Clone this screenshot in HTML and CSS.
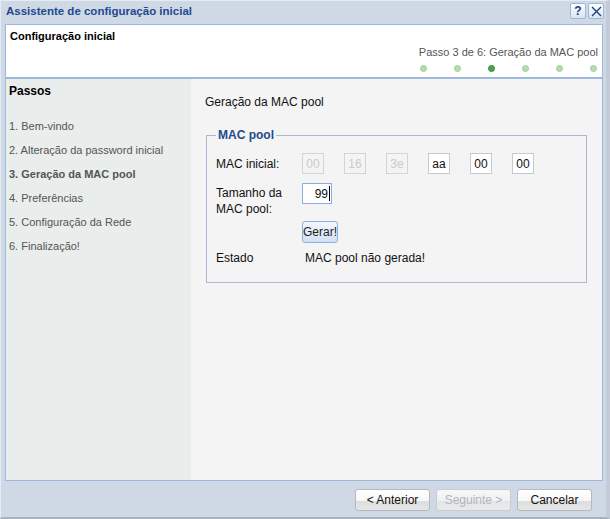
FILE: index.html
```html
<!DOCTYPE html>
<html lang="pt">
<head>
<meta charset="utf-8">
<link rel="stylesheet" href="styles.css">
</head>
<body>
<div class="window">
  <div class="titlebar">
    <span class="title">Assistente de configuração inicial</span>
    <div class="tb-buttons">
      <span class="tb-btn help">?</span>
      <span class="tb-btn close"><svg width="11" height="11" viewBox="0 0 11 11"><path d="M1 1L10 10M10 1L1 10" stroke="#1d3f7a" stroke-width="1.4" fill="none"/></svg></span>
    </div>
  </div>
  <div class="frame">
    <div class="header">
      <div class="h-title">Configuração inicial</div>
      <div class="h-step">Passo 3 de 6: Geração da MAC pool</div>
      <div class="dots">
        <span class="dot"></span><span class="dot"></span><span class="dot on"></span><span class="dot"></span><span class="dot"></span><span class="dot"></span>
      </div>
    </div>
    <div class="content">
      <div class="sidebar">
        <div class="s-title">Passos</div>
        <ul class="steps">
          <li>1. Bem-vindo</li>
          <li>2. Alteração da password inicial</li>
          <li class="current">3. Geração da MAC pool</li>
          <li>4. Preferências</li>
          <li>5. Configuração da Rede</li>
          <li>6. Finalização!</li>
        </ul>
      </div>
      <div class="main">
        <div class="m-title">Geração da MAC pool</div>
        <fieldset class="pool">
          <legend>MAC pool</legend>
          <div class="row mac-row">
            <span class="lbl">MAC inicial:</span>
            <div class="mac">
              <span class="box dis">00</span>
              <span class="box dis">16</span>
              <span class="box dis">3e</span>
              <span class="box">aa</span>
              <span class="box">00</span>
              <span class="box">00</span>
            </div>
          </div>
          <div class="row size-row">
            <span class="lbl">Tamanho da<br>MAC pool:</span>
            <span class="size-input">99<span class="caret"></span></span>
          </div>
          <div class="row gen-row">
            <span class="lbl"></span>
            <span class="gen-btn">Gerar!</span>
          </div>
          <div class="row state-row">
            <span class="lbl">Estado</span>
            <span class="state">MAC pool não gerada!</span>
          </div>
        </fieldset>
      </div>
    </div>
  </div>
  <div class="footer">
    <span class="btn">&lt; Anterior</span>
    <span class="btn disabled">Seguinte &gt;</span>
    <span class="btn">Cancelar</span>
  </div>
</div>
</body>
</html>
```
FILE: styles.css
```css
* { box-sizing: border-box; }
html, body { margin: 0; padding: 0; }
body {
  width: 610px;
  height: 519px;
  background: #cfd9e6;
  font-family: "Liberation Sans", Arial, sans-serif;
  overflow: hidden;
}
.window {
  width: 610px;
  height: 519px;
  display: flex;
  flex-direction: column;
  border-top: 1px solid #e6ecf3;
  border-left: 1px solid #e6ecf3;
  border-right: 4px solid #c3ccd6;
  border-bottom: 2px solid #a8b2bd;
  background: #cfd9e6;
}
.titlebar {
  height: 23px;
  display: flex;
  align-items: flex-start;
  justify-content: space-between;
  padding: 2px 2px 0 5px;
}
.title {
  font-weight: bold;
  font-size: 11.5px;
  line-height: 16px;
  color: #1f4a8e;
}
.tb-buttons { display: flex; gap: 2px; }
.tb-btn {
  width: 16px;
  height: 16px;
  border: 1px solid #9fb6d6;
  border-radius: 2px;
  background: linear-gradient(#ffffff, #d9e4f2);
  display: flex;
  align-items: center;
  justify-content: center;
  font-size: 12px;
  font-weight: bold;
  color: #1d3f7a;
}
.frame {
  margin: 0 0 0 4px;
  width: 598px;
  display: flex;
  flex-direction: column;
}
.header {
  height: 55px;
  background: #fff;
  border: 1px solid #9db8df;
  border-bottom: 2px solid #9db8df;
  padding: 5px 4px 0 4px;
}
.h-title {
  font-weight: bold;
  font-size: 11px;
  line-height: 13px;
  color: #000;
}
.h-step {
  text-align: right;
  font-size: 11px;
  line-height: 13px;
  color: #555;
  margin-top: 3px;
}
.dots {
  display: flex;
  justify-content: flex-end;
  gap: 27px;
  margin-top: 6px;
  padding-right: 1px;
}
.dot {
  width: 7px;
  height: 7px;
  border-radius: 50%;
  background: #b5dcb0;
  border: 1px solid #9fcf99;
}
.dot.on {
  background: #4ca24a;
  border-color: #3a8a38;
}
.content {
  height: 402px;
  display: flex;
  border: 1px solid #9db8df;
  border-top: none;
}
.sidebar {
  width: 185px;
  background: #e9edec;
  padding: 5px 0 0 3px;
}
.s-title {
  font-weight: bold;
  font-size: 12px;
  color: #000;
  height: 36px;
}
.steps {
  list-style: none;
  margin: 0;
  padding: 0;
  font-size: 11px;
  color: #555;
}
.steps li {
  height: 24px;
  line-height: 13px;
}
.steps li.current { font-weight: bold; }
.main {
  flex: 1;
  background: #f4f4f4;
  padding: 16px 14px 0 14px;
}
.m-title {
  font-size: 12px;
  color: #111;
  height: 33px;
}
.pool {
  margin: 0 0 0 1px;
  width: 381px;
  border: 1px solid #adb8cf;
  padding: 13px 9px 17px 9px;
}
.pool legend {
  font-weight: bold;
  font-size: 12px;
  color: #1f4a8e;
  padding: 0 2px;
  margin-left: 0;
}
.row {
  display: flex;
  font-size: 12px;
  color: #111;
}
.lbl { width: 86px; flex: none; }
.mac-row { align-items: center; height: 21px; margin-top: -2px; }
.mac { display: flex; gap: 20px; }
.box {
  width: 22px;
  height: 21px;
  border: 1px solid #c6c9cd;
  background: #fff;
  display: flex;
  align-items: center;
  justify-content: center;
  font-size: 12px;
  color: #111;
}
.box.dis {
  background: #f4f4f4;
  border-color: #d2d5d8;
  color: #c9cbcd;
}
.size-row { margin-top: 9px; line-height: 16px; }
.size-row .lbl { padding-top: 2px; }
.size-input {
  width: 30px;
  height: 21px;
  border: 1px solid #8aaee0;
  background: #fff;
  display: flex;
  align-items: center;
  justify-content: flex-end;
  padding-right: 1px;
  font-size: 12px;
}
.caret {
  width: 1px;
  height: 15px;
  background: #000;
  margin-left: 1px;
}
.gen-row { margin-top: 4px; }
.gen-btn {
  width: 36px;
  height: 22px;
  border: 1px solid #8aaee0;
  border-radius: 3px;
  background: linear-gradient(#f4f8fd, #cfe0f5);
  display: flex;
  align-items: center;
  justify-content: center;
  font-size: 12px;
  color: #222;
}
.state-row { margin-top: 8px; }
.state { padding-left: 3px; }
.footer {
  flex: 1;
  display: flex;
  justify-content: flex-end;
  align-items: flex-start;
  gap: 6px;
  padding: 8px 14px 0 0;
}
.btn {
  width: 75px;
  height: 22px;
  border: 1px solid #b3b9c0;
  border-radius: 3px;
  background: linear-gradient(#ffffff 0%, #f7f7f7 55%, #dedede 56%, #e6e6e6 100%);
  display: flex;
  align-items: center;
  justify-content: center;
  font-size: 12px;
  color: #111;
}
.btn.disabled {
  color: #b2b6ba;
  border-color: #c8cdd2;
  background: linear-gradient(#f6f7f8 0%, #eef0f1 55%, #e3e5e7 56%, #e8eaec 100%);
}
```
